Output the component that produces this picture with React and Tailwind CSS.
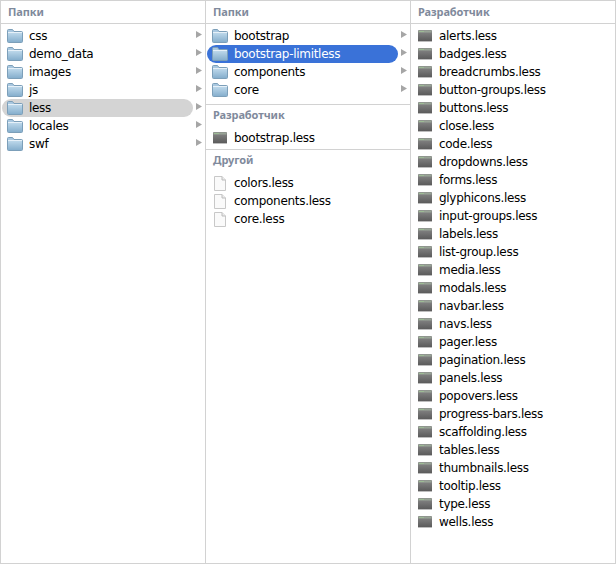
import React from "react";

const FolderIcon = () => (
    <svg width="16" height="14" viewBox="0 0 16 14" className="shrink-0">
        <defs>
            <linearGradient id="folderFill" x1="0" y1="0" x2="0" y2="1">
                <stop offset="0" stopColor="#bcd7ea" />
                <stop offset="1" stopColor="#86afcd" />
            </linearGradient>
        </defs>
        <path d="M0.5 12.5V1.5Q0.5 0.5 1.5 0.5H5.5L7 2.5H14.5Q15.5 2.5 15.5 3.5V12.5Q15.5 13.5 14.5 13.5H1.5Q0.5 13.5 0.5 12.5Z" fill="#a9c8e0" stroke="#7c9fb9" />
        <rect x="1" y="4" width="14" height="9" fill="url(#folderFill)" />
        <path d="M1 3.5H15" stroke="#e6f0f8" />
    </svg>
);

const ExecIcon = () => (
    <svg width="14" height="12" viewBox="0 0 14 12" className="shrink-0">
        <defs>
            <linearGradient id="execFill" x1="0" y1="0" x2="0" y2="1">
                <stop offset="0" stopColor="#8a8a8a" />
                <stop offset="1" stopColor="#575757" />
            </linearGradient>
        </defs>
        <rect x="0" y="0" width="14" height="12" rx="1" fill="url(#execFill)" />
        <rect x="0.5" y="0.5" width="13" height="2" fill="#98a396" />
        <rect x="1" y="1" width="5" height="1" fill="#9dbb95" />
        <rect x="0" y="11" width="14" height="1" fill="#bdbdbd" />
    </svg>
);

const DocIcon = () => (
    <svg width="12" height="15" viewBox="0 0 12 15" className="shrink-0">
        <path d="M0.5 0.5H8L11.5 4V14.5H0.5Z" fill="#fafafa" stroke="#c8c8c8" />
        <path d="M8 0.5V4H11.5" fill="#ececec" stroke="#bcbcbc" />
    </svg>
);

const Arrow = () => (
    <svg width="6" height="7" viewBox="0 0 6 7" className="mb-[3px] shrink-0">
        <path d="M0 0L6 3.5L0 7Z" fill="#a6a6a6" />
    </svg>
);

const Row = ({ name, type, selected, active }) => (
    <div className="flex h-[18px] items-center">
        <div
            className={`flex h-[18px] w-[191px] shrink-0 items-center rounded-full ${
                active ? "bg-[#3a72d8] text-white" : selected ? "bg-[#d4d4d4] text-black" : "text-black"
            }`}
        >
            <div className={`flex w-[27px] shrink-0 ${type === "folder" ? "pl-[5px]" : type === "exec" ? "pl-[6px]" : "pl-[7px]"}`}>
                {type === "folder" && <FolderIcon />}
                {type === "exec" && <ExecIcon />}
                {type === "doc" && <DocIcon />}
            </div>
            <span className="tracking-[-0.3px]">{name}</span>
        </div>
        {type === "folder" && <div className="ml-[3px] flex"><Arrow /></div>}
    </div>
);

const Title = ({ children }) => (
    <div
        className="pl-[7px] text-[11px] font-bold leading-[22px] tracking-[-0.1px] text-[#7f8a9c]"
        style={{ fontFamily: '"Noto Sans", sans-serif' }}
    >
        {children}
    </div>
);

const col1 = ["css", "demo_data", "images", "js", "less", "locales", "swf"];
const col2 = ["bootstrap", "bootstrap-limitless", "components", "core"];
const col2docs = ["colors.less", "components.less", "core.less"];
const col3 = [
    "alerts.less", "badges.less", "breadcrumbs.less", "button-groups.less", "buttons.less", "close.less",
    "code.less", "dropdowns.less", "forms.less", "glyphicons.less", "input-groups.less", "labels.less",
    "list-group.less", "media.less", "modals.less", "navbar.less", "navs.less", "pager.less",
    "pagination.less", "panels.less", "popovers.less", "progress-bars.less", "scaffolding.less", "tables.less",
    "thumbnails.less", "tooltip.less", "type.less", "wells.less",
];

export default function App() {
    return (
        <div
            className="flex h-[564px] w-[616px] border border-[#d2d2d2] bg-white text-[12px] leading-[18px]"
            style={{ fontFamily: '"DejaVu Sans", sans-serif' }}
        >
            <div className="w-[205px] shrink-0 border-r border-[#d2d2d2]">
                <div className="h-[23px] border-b border-[#d2d2d2]"><Title>Папки</Title></div>
                <div className="pl-px pt-[3px]">
                    {col1.map((name) => (
                        <Row key={name} name={name} type="folder" selected={name === "less"} />
                    ))}
                </div>
            </div>
            <div className="w-[205px] shrink-0 border-r border-[#d2d2d2]">
                <div className="h-[23px] border-b border-[#d2d2d2]"><Title>Папки</Title></div>
                <div className="h-[81px] border-b border-[#d2d2d2] pl-px pt-[3px]">
                    {col2.map((name) => (
                        <Row key={name} name={name} type="folder" active={name === "bootstrap-limitless"} />
                    ))}
                </div>
                <div className="flow-root h-[45px] border-b border-[#d2d2d2]">
                    <div className="-mt-px"><Title>Разработчик</Title></div>
                    <div className="pl-px pt-[3px]"><Row name="bootstrap.less" type="exec" /></div>
                </div>
                <div className="-mt-px"><Title>Другой</Title></div>
                <div className="pl-px pt-[3px]">
                    {col2docs.map((name) => (
                        <Row key={name} name={name} type="doc" />
                    ))}
                </div>
            </div>
            <div className="flex-1">
                <div className="h-[23px] border-b border-[#d2d2d2]"><Title>Разработчик</Title></div>
                <div className="pl-px pt-[3px]">
                    {col3.map((name) => (
                        <Row key={name} name={name} type="exec" />
                    ))}
                </div>
            </div>
        </div>
    );
}
